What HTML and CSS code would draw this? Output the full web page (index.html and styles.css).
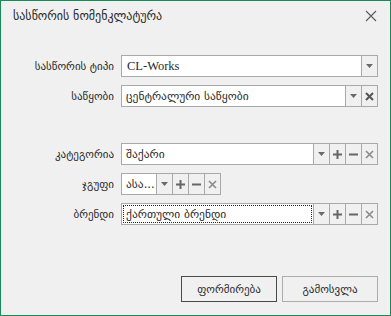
FILE: index.html
```html
<!DOCTYPE html>
<html>
<head>
<meta charset="utf-8">
<link rel="stylesheet" href="styles.css">
</head>
<body>
<div class="window">
  <div class="titlebar">
    <span class="title">სასწორის ნომენკლატურა</span>
    <svg class="close" width="12" height="12" viewBox="0 0 12 12"><path d="M1 1L11 11M11 1L1 11" stroke="#5a5a5a" stroke-width="1.1" fill="none"/></svg>
  </div>
  <div class="form">
    <div class="row">
      <label class="label">სასწორის ტიპი</label>
      <div class="combo w-full">
        <div class="field latin">CL-Works</div>
        <div class="btn"><svg width="7" height="4" viewBox="0 0 7 4"><path d="M0 0H7L3.5 4Z" fill="#6a6a6a"/></svg></div>
      </div>
    </div>
    <div class="row">
      <label class="label">საწყობი</label>
      <div class="combo w-full">
        <div class="field">ცენტრალური საწყობი</div>
        <div class="btn"><svg width="7" height="4" viewBox="0 0 7 4"><path d="M0 0H7L3.5 4Z" fill="#6a6a6a"/></svg></div>
        <div class="btn"><svg width="9" height="9" viewBox="0 0 9 9"><path d="M1 1L8 8M8 1L1 8" stroke="#555" stroke-width="2" fill="none"/></svg></div>
      </div>
    </div>
    <div class="row gap-top">
      <label class="label">კატეგორია</label>
      <div class="combo w-full">
        <div class="field">შაქარი</div>
        <div class="btn"><svg width="7" height="4" viewBox="0 0 7 4"><path d="M0 0H7L3.5 4Z" fill="#6a6a6a"/></svg></div>
        <div class="btn"><svg width="9" height="9" viewBox="0 0 9 9"><path d="M4.5 0V9M0 4.5H9" stroke="#666" stroke-width="2" fill="none"/></svg></div>
        <div class="btn"><svg width="9" height="9" viewBox="0 0 9 9"><path d="M0 4.5H9" stroke="#666" stroke-width="2" fill="none"/></svg></div>
        <div class="btn"><svg width="9" height="9" viewBox="0 0 9 9"><path d="M1 1L8 8M8 1L1 8" stroke="#8a8a8a" stroke-width="1.6" fill="none"/></svg></div>
      </div>
    </div>
    <div class="row">
      <label class="label">ჯგუფი</label>
      <div class="combo w-small">
        <div class="field">ასა...</div>
        <div class="btn"><svg width="7" height="4" viewBox="0 0 7 4"><path d="M0 0H7L3.5 4Z" fill="#6a6a6a"/></svg></div>
        <div class="btn"><svg width="9" height="9" viewBox="0 0 9 9"><path d="M4.5 0V9M0 4.5H9" stroke="#666" stroke-width="2" fill="none"/></svg></div>
        <div class="btn"><svg width="9" height="9" viewBox="0 0 9 9"><path d="M0 4.5H9" stroke="#666" stroke-width="2" fill="none"/></svg></div>
        <div class="btn"><svg width="9" height="9" viewBox="0 0 9 9"><path d="M1 1L8 8M8 1L1 8" stroke="#8a8a8a" stroke-width="1.6" fill="none"/></svg></div>
      </div>
    </div>
    <div class="row">
      <label class="label">ბრენდი</label>
      <div class="combo w-full">
        <div class="field focus"><span class="focus-box">ქართული ბრენდი</span></div>
        <div class="btn"><svg width="7" height="4" viewBox="0 0 7 4"><path d="M0 0H7L3.5 4Z" fill="#6a6a6a"/></svg></div>
        <div class="btn"><svg width="9" height="9" viewBox="0 0 9 9"><path d="M4.5 0V9M0 4.5H9" stroke="#666" stroke-width="2" fill="none"/></svg></div>
        <div class="btn"><svg width="9" height="9" viewBox="0 0 9 9"><path d="M0 4.5H9" stroke="#666" stroke-width="2" fill="none"/></svg></div>
        <div class="btn"><svg width="9" height="9" viewBox="0 0 9 9"><path d="M1 1L8 8M8 1L1 8" stroke="#8a8a8a" stroke-width="1.6" fill="none"/></svg></div>
      </div>
    </div>
  </div>
  <div class="footer">
    <button class="button primary">ფორმირება</button>
    <button class="button">გამოსვლა</button>
  </div>
</div>
</body>
</html>
```
FILE: styles.css
```css
html, body {
  margin: 0;
  padding: 0;
  background: #f0f0f0;
}
.window {
  box-sizing: border-box;
  width: 391px;
  height: 316px;
  border: 1px solid #1b8a5a;
  background: #f0f0f0;
  display: flex;
  flex-direction: column;
  font-family: "DejaVu Sans", sans-serif;
  font-size: 11px;
  color: #2a2a2a;
}
.titlebar {
  height: 30px;
  display: flex;
  align-items: center;
  justify-content: space-between;
  padding: 0 13px 0 12px;
}
.title {
  font-size: 12px;
  color: #2a2a2a;
}
.close {
  display: block;
}
.form {
  padding-top: 24px;
  display: flex;
  flex-direction: column;
  gap: 8px;
}
.row {
  display: flex;
  align-items: center;
  height: 22px;
}
.row.gap-top {
  margin-top: 28px;
}
.label {
  width: 113px;
  padding-right: 7px;
  text-align: right;
}
.combo {
  box-sizing: border-box;
  height: 22px;
  display: flex;
  border: 1px solid #a9a9a9;
  background: #fff;
}
.w-full { width: 257px; }
.w-small { width: 100px; }
.field {
  flex: 1;
  min-width: 0;
  display: flex;
  align-items: center;
  padding-left: 4px;
  background: #fff;
  font-size: 11.5px;
  white-space: nowrap;
  overflow: hidden;
}
.field.latin {
  font-family: "Liberation Serif", serif;
  font-size: 12.5px;
  padding-left: 5px;
}
.field.focus {
  padding: 1px;
}
.focus-box {
  box-sizing: border-box;
  flex: 1;
  height: 100%;
  border: 1px dotted #222;
  display: flex;
  align-items: center;
  padding-left: 2px;
}
.btn {
  width: 15px;
  border-left: 1px solid #a9a9a9;
  background: #f0f0f0;
  display: flex;
  align-items: center;
  justify-content: center;
}
.btn svg { display: block; }
.footer {
  margin-top: auto;
  display: flex;
  justify-content: flex-end;
  gap: 5px;
  padding: 0 12px 13px 0;
}
.button {
  box-sizing: border-box;
  width: 96px;
  height: 26px;
  background: #f0f0f0;
  border: 1px solid #adadad;
  font-family: "DejaVu Sans", sans-serif;
  font-size: 11px;
  color: #2a2a2a;
  padding: 0;
}
.button.primary {
  border-color: #4a4a4a;
}
```
